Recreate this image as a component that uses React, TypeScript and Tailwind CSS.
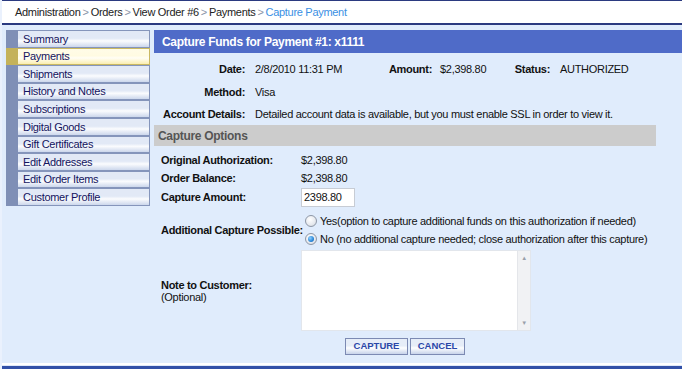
import React from 'react';

const navItems = [
    'Summary',
    'Payments',
    'Shipments',
    'History and Notes',
    'Subscriptions',
    'Digital Goods',
    'Gift Certificates',
    'Edit Addresses',
    'Edit Order Items',
    'Customer Profile',
];

function Radio({ checked }: { checked?: boolean }) {
    return (
        <span className="relative inline-flex w-[12px] h-[12px] rounded-full border border-[#8e97a6] bg-[radial-gradient(circle_at_40%_35%,#ffffff_0%,#e6e9ee_60%,#c9ced6_100%)] items-center justify-center">
            {checked && <span className="w-[6px] h-[6px] rounded-full bg-[radial-gradient(circle_at_35%_35%,#8fd0ff_0%,#2b87d8_60%,#1f5fa8_100%)]" />}
        </span>
    );
}

export default function App() {
    return (
        <div
            className="w-[682px] h-[369px] flex flex-col bg-[#e0ecfc] border-l-2 border-[#eaf1fd] text-[11px] tracking-[-0.3px] text-[#111] overflow-hidden"
            style={{ fontFamily: "'Liberation Sans', Arial, sans-serif" }}
        >
            {/* Breadcrumb */}
            <div className="h-[25px] shrink-0 bg-white border-t border-b-2 border-[#2b3a80] flex items-center pl-[13px] text-[#222]">
                <span>Administration</span>
                <span className="text-[#8a94a8] mx-[2px]">&gt;</span>
                <span>Orders</span>
                <span className="text-[#8a94a8] mx-[2px]">&gt;</span>
                <span>View Order #6</span>
                <span className="text-[#8a94a8] mx-[2px]">&gt;</span>
                <span>Payments</span>
                <span className="text-[#8a94a8] mx-[2px]">&gt;</span>
                <span className="text-[#3a90e4]">Capture Payment</span>
            </div>

            {/* Body */}
            <div className="flex-1 flex pt-[5px]">
                {/* Side menu */}
                <div className="ml-[4px] w-[144px] shrink-0 flex flex-col">
                    {navItems.map((item) => {
                        const active = item === 'Payments';
                        return (
                            <div key={item} className="flex h-[17.6px]">
                                <div className={`w-[12px] ${active ? 'bg-[#c4b25a]' : 'bg-[#7f8fb6]'}`} />
                                <div
                                    className={`flex-1 flex items-center pl-[5px] border border-l-0 text-[#14145e] ${
                                        active
                                            ? 'border-[#c9b863] bg-[linear-gradient(180deg,#fffce8_0%,#fffbe2_45%,#fffef6_60%,#fbeeb0_100%)]'
                                            : 'border-[#8595bb] bg-[linear-gradient(180deg,#e2e9f6_0%,#e2e9f6_45%,#fbfcfe_62%,#ccd7ec_100%)]'
                                    }`}
                                >
                                    {item}
                                </div>
                            </div>
                        );
                    })}
                </div>

                {/* Main */}
                <div className="flex-1 ml-[4px] flex flex-col">
                    <div className="h-[23px] bg-[#4f6bc8] text-white font-bold text-[12px] flex items-center pl-[8px]">
                        Capture Funds for Payment #1: x1111
                    </div>

                    <div className="pt-[5px]">
                        <div className="h-[23px] flex items-center">
                            <span className="w-[91px] text-right font-bold">Date:</span>
                            <span className="w-[117px] pl-[10px]">2/8/2010 11:31 PM</span>
                            <span className="w-[70px] text-right font-bold">Amount:</span>
                            <span className="w-[57px] pl-[8px]">$2,398.80</span>
                            <span className="w-[61px] text-right font-bold">Status:</span>
                            <span className="pl-[10px]">AUTHORIZED</span>
                        </div>
                        <div className="h-[23px] flex items-center">
                            <span className="w-[91px] text-right font-bold">Method:</span>
                            <span className="pl-[10px]">Visa</span>
                        </div>
                        <div className="h-[21px] flex items-center">
                            <span className="w-[91px] text-right font-bold whitespace-nowrap">Account Details:</span>
                            <span className="pl-[10px]">Detailed account data is available, but you must enable SSL in order to view it.</span>
                        </div>
                    </div>

                    <div className="w-[502px] h-[21px] bg-[#cccccc] flex items-center pl-[4px] text-[12px] font-bold text-[#555]">
                        Capture Options
                    </div>

                    <div className="pt-[5px] pl-[7px] flex flex-col">
                        <div className="h-[18px] flex items-center">
                            <span className="w-[140px] font-bold">Original Authorization:</span>
                            <span>$2,398.80</span>
                        </div>
                        <div className="h-[18px] flex items-center">
                            <span className="w-[140px] font-bold">Order Balance:</span>
                            <span>$2,398.80</span>
                        </div>
                        <div className="h-[21px] flex items-center">
                            <span className="w-[140px] font-bold">Capture Amount:</span>
                            <div className="w-[54px] h-[19px] bg-white border border-[#c7ccd4] flex items-center pl-[2px]">2398.80</div>
                        </div>
                        <div className="mt-[4px] flex items-center">
                            <span className="w-[140px] font-bold whitespace-nowrap">Additional Capture Possible:</span>
                            <div className="flex flex-col pl-[4px]">
                                <div className="h-[18px] flex items-center gap-[3px]">
                                    <Radio />
                                    <span>Yes(option to capture additional funds on this authorization if needed)</span>
                                </div>
                                <div className="h-[18px] flex items-center gap-[3px]">
                                    <Radio checked />
                                    <span>No (no additional capture needed; close authorization after this capture)</span>
                                </div>
                            </div>
                        </div>
                        <div className="mt-[2px] flex items-center">
                            <div className="w-[140px] flex flex-col leading-[12px]">
                                <span className="font-bold">Note to Customer:</span>
                                <span>(Optional)</span>
                            </div>
                            <div className="w-[230px] h-[81px] bg-white border border-[#e2e6ec] flex justify-end">
                                <div className="w-[13px] h-full bg-[#f1f2f4] border-l border-[#e4e6ea] flex flex-col items-center justify-between py-[4px] text-[#9aa0aa] text-[6px] leading-none">
                                    <span>▲</span>
                                    <span>▼</span>
                                </div>
                            </div>
                        </div>
                        <div className="mt-[7px] pl-[184px] flex gap-[2px]">
                            {['CAPTURE', 'CANCEL'].map((label) => (
                                <button
                                    key={label}
                                    className={`h-[17px] ${label === 'CAPTURE' ? 'w-[63px]' : 'w-[55px]'} border border-[#7c8ab3] bg-[linear-gradient(180deg,#e6edf8_0%,#e6edf8_45%,#fdfeff_60%,#c7d3ea_100%)] text-[#2a47a8] font-bold text-[9.5px] tracking-normal flex items-center justify-center`}
                                >
                                    {label}
                                </button>
                            ))}
                        </div>
                    </div>
                </div>
            </div>

            {/* Bottom border */}
            <div className="h-[2px] shrink-0 bg-white" />
            <div className="h-[1px] shrink-0 bg-[#dfe8f8]" />
            <div className="h-[3px] shrink-0 bg-[#3150a8]" />
        </div>
    );
}
